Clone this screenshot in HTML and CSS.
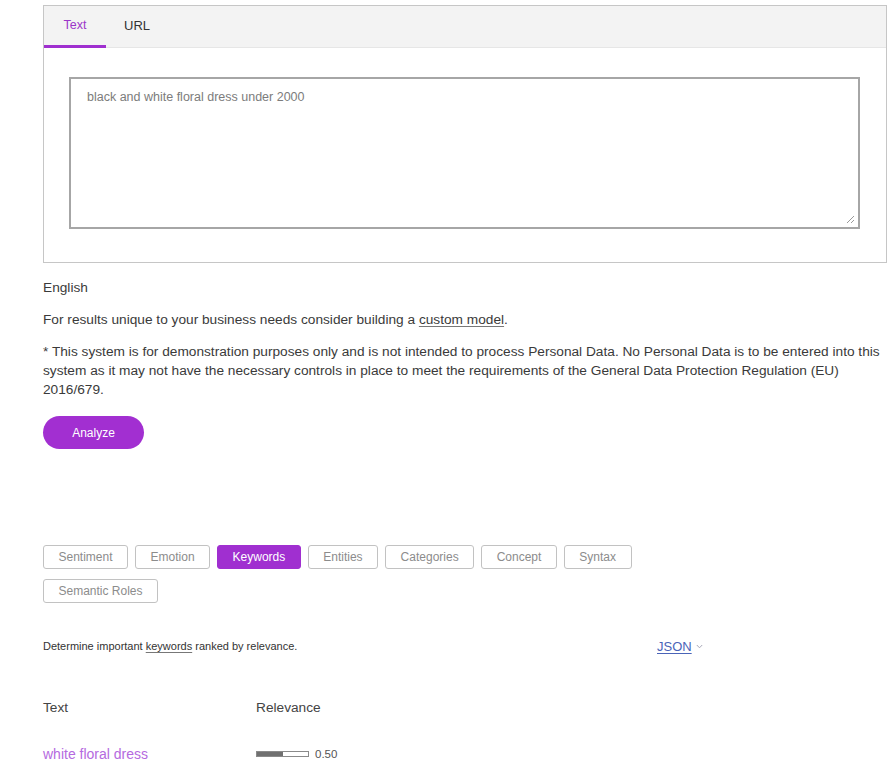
FILE: index.html
```html
<!DOCTYPE html>
<html lang="en">
<head>
<meta charset="utf-8">
<title>Natural Language Understanding</title>
<link rel="stylesheet" href="styles.css">
</head>
<body>
<main class="page">
  <section class="panel">
    <nav class="tabs">
      <span class="tab tab-active">Text</span>
      <span class="tab">URL</span>
    </nav>
    <div class="editor">
      <div class="input">
        <span class="input-text">black and white floral dress under 2000</span>
        <svg class="grip" width="9" height="9" viewBox="0 0 9 9"><path d="M8 1 1 8M8 5 5 8" stroke="#9a9a9a" stroke-width="1" fill="none"/></svg>
      </div>
    </div>
  </section>

  <p class="lang">English</p>
  <p class="note">For results unique to your business needs consider building a <a class="ul" href="#">custom model</a>.</p>
  <p class="disclaimer">* This system is for demonstration purposes only and is not intended to process Personal Data. No Personal Data is to be entered into this system as it may not have the necessary controls in place to meet the requirements of the General Data Protection Regulation (EU) 2016/679.</p>
  <button class="analyze">Analyze</button>

  <div class="features">
    <span class="chip">Sentiment</span>
    <span class="chip">Emotion</span>
    <span class="chip chip-on">Keywords</span>
    <span class="chip">Entities</span>
    <span class="chip">Categories</span>
    <span class="chip">Concept</span>
    <span class="chip">Syntax</span>
    <span class="chip">Semantic Roles</span>
  </div>

  <div class="desc-row">
    <p class="desc">Determine important <a class="ul" href="#">keywords</a> ranked by relevance.</p>
    <a class="json" href="#">JSON</a><svg class="chev" width="7" height="5" viewBox="0 0 7 5"><path d="M0.8 1 3.5 3.8 6.2 1" stroke="#a8a8b8" stroke-width="1" fill="none"/></svg>
  </div>

  <div class="results">
    <div class="rhead">
      <span class="col1">Text</span>
      <span>Relevance</span>
    </div>
    <div class="rrow">
      <span class="col1 kw">white floral dress</span>
      <span class="bar"><span class="fill" style="width:50%"></span></span>
      <span class="score">0.50</span>
    </div>
  </div>
</main>
</body>
</html>
```

FILE: styles.css
```css
* { box-sizing: border-box; }

body {
  margin: 0;
  background: #fff;
  font-family: "Liberation Sans", Arial, Helvetica, sans-serif;
  color: #3a3a3a;
}

.page {
  width: 891px;
  padding: 5px 4px 0 43px;
}

.panel {
  width: 844px;
  height: 258px;
  border: 1.5px solid #c6c6c6;
}

.tabs {
  display: flex;
  height: 42px;
  background: #f3f3f3;
  border-bottom: 1px solid #e6e6e6;
}

.tab {
  display: flex;
  align-items: center;
  padding: 0 18px 3px;
  font-size: 13px;
  color: #333;
}

.tab-active {
  width: 62px;
  justify-content: center;
  padding: 0 0 1px;
  font-size: 12.5px;
  color: #9b36c9;
  border-bottom: 3px solid #9f2fcf;
  margin-bottom: -1px;
}

.editor {
  padding: 29px 26px 0 25px;
}

.input {
  position: relative;
  height: 152px;
  border: 2px solid #a6a6a6;
  padding: 8px 16px;
}

.input-text {
  font-size: 12.5px;
  color: #7c7c7c;
}

.grip {
  position: absolute;
  right: 3px;
  bottom: 3px;
}

p { margin: 0; }

.lang,
.note,
.disclaimer {
  font-size: 13.7px;
  line-height: 19px;
}

.lang { margin-top: 15px; }
.note { margin-top: 13px; }
.disclaimer { margin-top: 13px; width: 846px; }

.ul {
  color: inherit;
  text-decoration: underline;
  text-decoration-color: #777;
  text-underline-offset: 2px;
}

.analyze {
  display: block;
  margin-top: 17px;
  width: 101px;
  height: 33px;
  border: none;
  border-radius: 17px;
  background: #a22fd1;
  color: #fff;
  font-family: inherit;
  font-size: 12px;
}

.features {
  display: flex;
  flex-wrap: wrap;
  gap: 10px 7px;
  width: 600px;
  margin-top: 96px;
}

.chip {
  display: flex;
  align-items: center;
  height: 24px;
  padding: 0 14.5px;
  border: 1.5px solid #c2c2c2;
  border-radius: 3px;
  font-size: 12px;
  color: #8c8c8c;
}

.chip-on {
  background: #a02fd0;
  border-color: #a02fd0;
  color: #fff;
}

.desc-row {
  display: flex;
  align-items: center;
  margin-top: 36px;
  height: 14px;
}

.desc {
  width: 614px;
  font-size: 11px;
  color: #333;
}

.json {
  font-size: 13px;
  color: #4a64b8;
  text-decoration: underline;
  text-underline-offset: 2px;
  margin-right: 4px;
}

.chev { margin-top: 1px; }

.results {
  margin-top: 45px;
}

.rhead,
.rrow {
  display: flex;
  align-items: center;
  height: 19px;
  font-size: 13.7px;
}

.rrow { margin-top: 27px; }

.col1 { width: 213px; }

.rhead { color: #444; }

.kw { color: #b56ae0; font-size: 14px; }

.bar {
  display: flex;
  width: 53px;
  height: 6px;
  border: 1px solid #8a8a8a;
  background: #fff;
}

.fill {
  display: block;
  height: 100%;
  background: #707070;
}

.score {
  margin-left: 6px;
  font-size: 11.5px;
  color: #555;
}
```
